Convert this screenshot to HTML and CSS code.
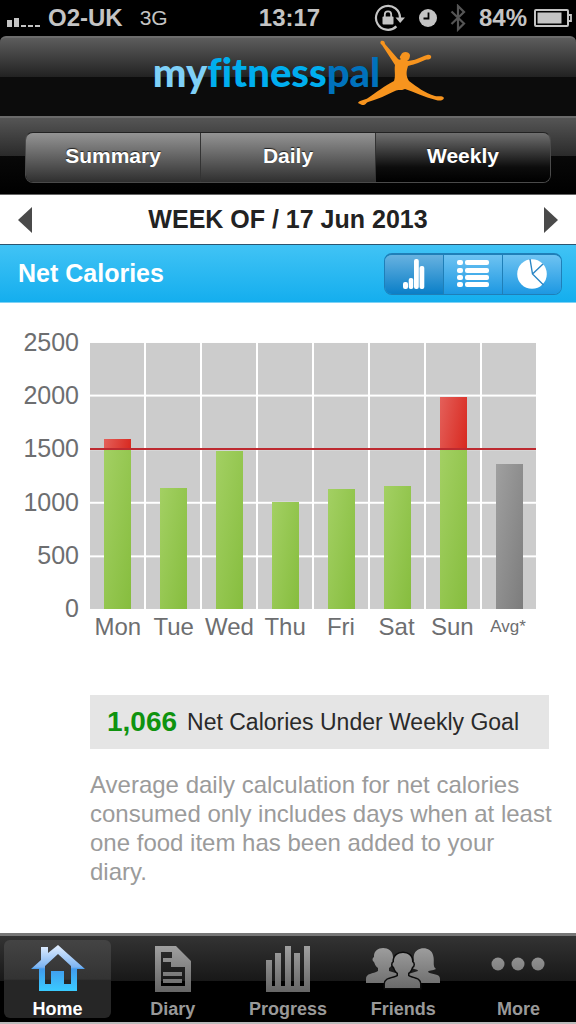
FILE: index.html
```html
<!DOCTYPE html>
<html lang="en">

<head>
    <meta charset="UTF-8" />
    <meta name="viewport" content="width=device-width, initial-scale=1.0" />
    <title>MyFitnessPal - Net Calories</title>
    <link rel="stylesheet" href="styles.css">
</head>

<body>
    <div class="status-bar">
        <div class="status-left">
            <svg class="signal" width="34" height="10" viewBox="0 0 34 10" fill="#c4c4c4">
                <rect x="0" y="3" width="5" height="7" />
                <rect x="7" y="1" width="5" height="9" />
                <rect x="14" y="8" width="5" height="2" />
                <rect x="21" y="8" width="5" height="2" />
                <rect x="28" y="8" width="5" height="2" />
            </svg>
            <span class="carrier">O2-UK</span>
            <span class="network">3G</span>
        </div>
        <div class="clock">13:17</div>
        <div class="status-right">
            <!-- rotation lock -->
            <svg width="32" height="28" viewBox="0 0 32 28">
                <path d="M22.4 22.4A12 12 0 1 1 26 14" fill="none" stroke="#c4c4c4" stroke-width="2.2" />
                <path d="M21.5 13.5H31L26.2 19z" fill="#c4c4c4" />
                <rect x="8.5" y="12.5" width="11" height="8" rx="1" fill="#c4c4c4" />
                <path d="M10.8 13V10.5a3.2 3.2 0 0 1 6.4 0V13" fill="none" stroke="#c4c4c4" stroke-width="1.8" />
            </svg>
            <!-- alarm -->
            <svg width="18" height="18" viewBox="0 0 18 18">
                <circle cx="9" cy="9" r="9" fill="#c4c4c4" />
                <path d="M9.5 3.5V9.5H4.5" fill="none" stroke="#000" stroke-width="1.8" />
            </svg>
            <!-- bluetooth -->
            <svg width="16" height="28" viewBox="0 0 16 28">
                <path d="M1.5 7.5L14 19.5L8 25.5V2L14 8L1.5 20" fill="none" stroke="#555" stroke-width="2.2" />
            </svg>
            <span class="battery-level">84%</span>
            <svg width="38" height="18" viewBox="0 0 38 18">
                <rect x="1" y="1" width="33" height="16" rx="1" fill="none" stroke="#c4c4c4" stroke-width="2" />
                <rect x="3.5" y="3.5" width="24" height="11" fill="#c4c4c4" />
                <path d="M34 6h3v6h-3" fill="none" stroke="#c4c4c4" stroke-width="1.8" />
            </svg>
        </div>
    </div>

    <header class="header">
        <div class="logo">
            <span class="logo-my">my</span><span class="logo-fitness">fitness</span><span class="logo-pal">pal</span>
            <svg class="logo-figure" width="88" height="66" viewBox="0 0 88 66" fill="#f7941e">
                <path d="M24 1C26 0 28 1 28 4L41 19C42 20 43 20 44 19C42 18 43 16 44 15C45 11 52 11 53 15C53 18 52 20 50 21C57 21 64 17 70 15C73 14 75 16 74 18C73 20 70 19 68 20C62 23 55 25 51 26C49 32 49 36 52 41C60 47 68 53 78 56C81 57 85 55 87 58C86 61 82 61 79 60C67 57 57 52 48 49C44 51 41 49 38 51C29 55 22 59 11 62C8 63 10 65 5 65L1 63C2 60 8 60 11 58C20 52 27 46 37 41C39 36 37 30 38 25L25 5C23 4 23 2 24 1Z" />
            </svg>
        </div>
    </header>

    <nav class="period-bar">
        <div class="period-tabs">
            <button type="button">Summary</button>
            <button type="button">Daily</button>
            <button type="button" class="selected">Weekly</button>
        </div>
    </nav>

    <div class="week-bar">
        <button type="button" aria-label="Previous week">
            <svg width="14" height="26" viewBox="0 0 14 26"><path d="M14 0V26L0 13z" fill="#4a4a4a" /></svg>
        </button>
        <h1>WEEK OF / 17 Jun 2013</h1>
        <button type="button" aria-label="Next week">
            <svg width="14" height="26" viewBox="0 0 14 26"><path d="M0 0V26L14 13z" fill="#4a4a4a" /></svg>
        </button>
    </div>

    <div class="section-bar">
        <h2>Net Calories</h2>
        <div class="view-tabs">
            <button type="button" class="selected" aria-label="Bar chart">
                <svg width="22" height="32" viewBox="0 0 22 32" fill="#fff">
                    <rect x="0" y="24" width="5" height="7" rx="2" />
                    <rect x="5.7" y="20" width="4.6" height="11" rx="2" />
                    <rect x="11" y="1" width="4.8" height="30" rx="2" />
                    <rect x="16.5" y="8" width="4.8" height="23" rx="2" />
                </svg>
            </button>
            <button type="button" aria-label="List">
                <svg width="32" height="30" viewBox="0 0 32 30" fill="#fff">
                    <rect x="0" y="1" width="6" height="5" rx="2" />
                    <rect x="8" y="1" width="24" height="5" rx="2" />
                    <rect x="0" y="9" width="6" height="5" rx="2" />
                    <rect x="8" y="9" width="24" height="5" rx="2" />
                    <rect x="0" y="16" width="6" height="5" rx="2" />
                    <rect x="8" y="16" width="24" height="5" rx="2" />
                    <rect x="0" y="23" width="6" height="5" rx="2" />
                    <rect x="8" y="23" width="24" height="5" rx="2" />
                </svg>
            </button>
            <button type="button" aria-label="Pie chart">
                <svg width="30" height="32" viewBox="0 0 30 32">
                    <circle cx="15" cy="16" r="14.8" fill="#fff" />
                    <path d="M13 1L15.5 16L26.5 27M15.500 16L26 6" fill="none" stroke="#2a86c6" stroke-width="1.4" />
                </svg>
            </button>
        </div>
    </div>

    <main class="content">
        <div class="chart">
            <div class="y-axis">
                <span>2500</span>
                <span>2000</span>
                <span>1500</span>
                <span>1000</span>
                <span>500</span>
                <span>0</span>
            </div>
            <div class="plot">
                <div class="day"><div class="over" style="height: 4%"></div><div class="bar" style="height: 59.6%"></div></div>
                <div class="day"><div class="bar" style="height: 45.3%"></div></div>
                <div class="day"><div class="bar" style="height: 58.8%"></div></div>
                <div class="day"><div class="bar" style="height: 39.9%"></div></div>
                <div class="day"><div class="bar" style="height: 44.6%"></div></div>
                <div class="day"><div class="bar" style="height: 45.9%"></div></div>
                <div class="day"><div class="over" style="height: 19.4%"></div><div class="bar" style="height: 59.6%"></div></div>
                <div class="day"><div class="bar average" style="height: 54%"></div></div>
                <div class="goal-line"></div>
            </div>
            <div class="x-axis">
                <span>Mon</span>
                <span>Tue</span>
                <span>Wed</span>
                <span>Thu</span>
                <span>Fri</span>
                <span>Sat</span>
                <span>Sun</span>
                <span class="small">Avg*</span>
            </div>
        </div>

        <div class="goal-box">
            <strong>1,066</strong>
            <span>Net Calories Under Weekly Goal</span>
        </div>
        <p class="note">Average daily calculation for net calories consumed only includes days when at least one food item has been added to your diary.</p>
    </main>

    <nav class="tab-bar">
        <a href="#home" class="active">
            <svg width="54" height="48" viewBox="0 0 54 48">
                <defs>
                    <linearGradient id="home-fill" x1="0" y1="0" x2="0" y2="1">
                        <stop offset="0" stop-color="#e4efff" />
                        <stop offset="0.48" stop-color="#7db4f2" />
                        <stop offset="0.52" stop-color="#419bed" />
                        <stop offset="1" stop-color="#3acbff" />
                    </linearGradient>
                    <linearGradient id="tab-fill" gradientUnits="userSpaceOnUse" x1="0" y1="0" x2="0" y2="48">
                        <stop offset="0" stop-color="#a2a2a2" />
                        <stop offset="1" stop-color="#666" />
                    </linearGradient>
                </defs>
                <path fill="url(#home-fill)" fill-rule="evenodd" d="M27 1L37 10L54 25H46V47H8V25H0L10 16V3H17V9ZM27 10L14 22V40H20V27H33V40H40V22Z" />
            </svg>
            <span>Home</span>
        </a>
        <a href="#diary">
            <svg width="36" height="48" viewBox="0 0 36 48">
                <path fill="url(#tab-fill)" fill-rule="evenodd" d="M0 2H21L36 17V48H0ZM6 8V42H30V23H16V18H8V14H17V8Z" />
                <path fill="url(#tab-fill)" d="M8 28H27V32H8zM8 35H27V39H8z" />
            </svg>
            <span>Diary</span>
        </a>
        <a href="#progress">
            <svg width="44" height="48" viewBox="0 0 44 48" fill="url(#tab-fill)">
                <path d="M0 16H6V42H9V9H15V42H19V2H25V42H28V9H34V42H38V2H44V48H0Z" />
            </svg>
            <span>Progress</span>
        </a>
        <a href="#friends">
            <svg width="74" height="48" viewBox="0 0 74 48" fill="url(#tab-fill)">
                <path d="M0 39V35C0 29 7 30 12 27V24C9 22 9 20 8 18C6 17 6 14 8 13C7 1 27 1 27 13C29 14 28 17 26 18C26 21 25 23 23 24V27L36 31V39Z" />
                <path d="M39 39V31L52 27C52 25 49 26 46 24C49 20 47 15 48 11C50 2 65 2 67 11C69 17 66 22 70 25C67 27 62 26 62 28C66 31 74 29 74 35V39Z" />
                <path stroke="#0c0c0c" stroke-width="3" paint-order="stroke" d="M19 44V40C19 34 27 35 32 32V29C29 27 29 25 28 23C26 22 26 19 28 18C27 6 47 6 46 18C48 19 48 22 46 23C45 25 45 27 42 29V32C47 35 54 34 54 40V44Z" />
            </svg>
            <span>Friends</span>
        </a>
        <a href="#more">
            <svg width="54" height="48" viewBox="0 0 54 48" fill="url(#tab-fill)">
                <circle cx="7" cy="20" r="6.5" />
                <circle cx="27" cy="20" r="6.5" />
                <circle cx="47" cy="20" r="6.5" />
            </svg>
            <span>More</span>
        </a>
    </nav>
</body>

</html>
```
FILE: styles.css
```css
* {
    box-sizing: border-box;
}

body {
    display: flex;
    flex-direction: column;
    min-height: 100vh;
    margin: 0;
    font-family: "Liberation Sans", Arial, sans-serif;
    background: #fff;
}

svg {
    display: block;
    flex-shrink: 0;
}

button {
    padding: 0;
    border: none;
    background: none;
    font-family: inherit;
    cursor: pointer;
}

/* Status bar */
.status-bar {
    display: grid;
    grid-template-columns: 1fr auto 1fr;
    align-items: center;
    height: 36px;
    padding: 0 4px 0 7px;
    background: #000;
    color: #c4c4c4;
    font-size: 24px;
    font-weight: bold;
}

.status-left,
.status-right {
    display: flex;
    align-items: center;
}

.status-left {
    gap: 7px;
}

.signal {
    margin-top: 8px;
}

.network {
    margin-left: 10px;
    font-size: 21px;
    font-weight: normal;
}

.status-right {
    justify-content: flex-end;
    gap: 13px;
}

.battery-level {
    margin-right: -6px;
}

/* Header */
.header {
    background: #000;
}

.logo {
    display: flex;
    justify-content: center;
    height: 80px;
    padding: 2px 0 0 22px;
    border-top: 2px solid #6c6c6c;
    border-radius: 6px 6px 0 0;
    background: linear-gradient(#5c5c5c, #222 50%, #0c0c0c 50%, #0c0c0c);
    font-family: Lato, sans-serif;
    font-size: 40px;
    font-weight: 900;
    font-variant-ligatures: none;
    line-height: 64px;
}

.logo-my {
    color: #7fd0f7;
}

.logo-fitness {
    color: #00aeef;
}

.logo-pal {
    color: #0072bc;
}

.logo-figure {
    margin-left: -23px;
}

.period-bar {
    padding: 14px 25px 11px;
    border-top: 2px solid #6a6a6a;
    background: linear-gradient(#555, #2a2a2a 50%, #080808 50%, #000);
}

.period-tabs {
    display: flex;
    border: 1px solid #4a4a4a;
    border-top-color: #222;
    border-radius: 8px;
    overflow: hidden;
}

.period-tabs button {
    flex: 1;
    height: 49px;
    padding-bottom: 3px;
    border-left: 1px solid #333;
    background: linear-gradient(#949494, #2f2f2f);
    color: #fff;
    font-size: 21px;
    font-weight: bold;
    text-shadow: 0 -1px 1px #222;
}

.period-tabs button:first-child {
    border-left: none;
}

.period-tabs .selected {
    background: linear-gradient(#707070, #0c0c0c 70%, #000);
}

.week-bar {
    display: flex;
    align-items: center;
    justify-content: space-between;
    height: 51px;
    padding: 0 18px;
    border-top: 1px solid #666;
    border-bottom: 1px solid #2c5570;
}

.week-bar h1 {
    margin: 0;
    color: #222;
    font-size: 25px;
}

.section-bar {
    display: flex;
    align-items: center;
    justify-content: space-between;
    height: 58px;
    padding: 0 14px 0 18px;
    border-bottom: 1px solid #7fd2f5;
    background: linear-gradient(#41c3f5, #14aeee);
}

.section-bar h2 {
    margin: 0;
    color: #fff;
    font-size: 25px;
}

.view-tabs {
    display: flex;
    border: 1px solid #1f7fb8;
    border-top-width: 2px;
    border-radius: 8px;
    overflow: hidden;
}

.view-tabs button {
    display: flex;
    align-items: center;
    justify-content: center;
    width: 58px;
    height: 39px;
    background: linear-gradient(#6ec3f2, #1d98e2);
}

.view-tabs button + button {
    width: 59px;
    border-left: 1px solid #1f7fb8;
}

.view-tabs .selected {
    background: linear-gradient(#68b2e0, #0a7fc8);
}

/* Chart */
.content {
    flex: 1;
    padding: 38px 27px 20px 20px;
}

.chart {
    display: grid;
    grid-template-columns: 59px 1fr;
    column-gap: 11px;
    padding-right: 13px;
    color: #6d6e70;
    font-size: 24px;
}

.y-axis {
    display: flex;
    flex-direction: column;
    justify-content: space-between;
    margin: -14px 0;
    font-size: 25px;
    line-height: 30px;
    text-align: right;
}

.plot {
    position: relative;
    display: flex;
    gap: 2px;
    height: 268px;
}

.day {
    display: flex;
    flex: 1;
    flex-direction: column;
    align-items: center;
    justify-content: flex-end;
    background: linear-gradient(#fff 2px, #ccc 2px) 0 0 / 100% 20%;
}

.bar,
.over {
    width: 27px;
}

.bar {
    background: linear-gradient(100deg, #a3d063, #86bd3e);
}

.over {
    background: linear-gradient(100deg, #e4605a, #d8281f);
}

.average {
    background: linear-gradient(100deg, #a0a0a0, #7c7c7c);
}

.goal-line {
    position: absolute;
    top: 40%;
    left: 0;
    right: 0;
    height: 2px;
    background: #bd2a30;
}

.x-axis {
    display: flex;
    grid-column: 2;
    align-items: center;
    height: 36px;
}

.x-axis span {
    flex: 1 1 0;
    min-width: 0;
    text-align: center;
    white-space: nowrap;
}

.x-axis .small {
    font-size: 17px;
}

.goal-box {
    display: flex;
    align-items: center;
    gap: 10px;
    height: 54px;
    margin: 50px 0 0 70px;
    padding: 0 17px;
    background: #e5e5e5;
    color: #2a2a2a;
    font-size: 23px;
}

.goal-box strong {
    color: #0f930f;
    font-size: 28px;
}

.note {
    margin: 21px -6px 0 70px;
    color: #9b9b9b;
    font-size: 24px;
    line-height: 29px;
}

/* Bottom tabs */
.tab-bar {
    display: flex;
    height: 91px;
    border-top: 3px solid #777;
    border-bottom: 2px solid #bbb;
    background: linear-gradient(#333, #181818 52%, #000 52%);
}

.tab-bar a {
    display: flex;
    flex: 1 1 0;
    flex-direction: column;
    align-items: center;
    margin: 4px;
    padding-top: 4px;
    border-radius: 6px;
    color: #999;
    font-size: 18px;
    font-weight: bold;
    text-decoration: none;
}

.tab-bar span {
    margin-top: 7px;
    line-height: 20px;
}

.tab-bar .active {
    background: linear-gradient(#444, #333 50%, #262626 52%);
    color: #fff;
}
```
